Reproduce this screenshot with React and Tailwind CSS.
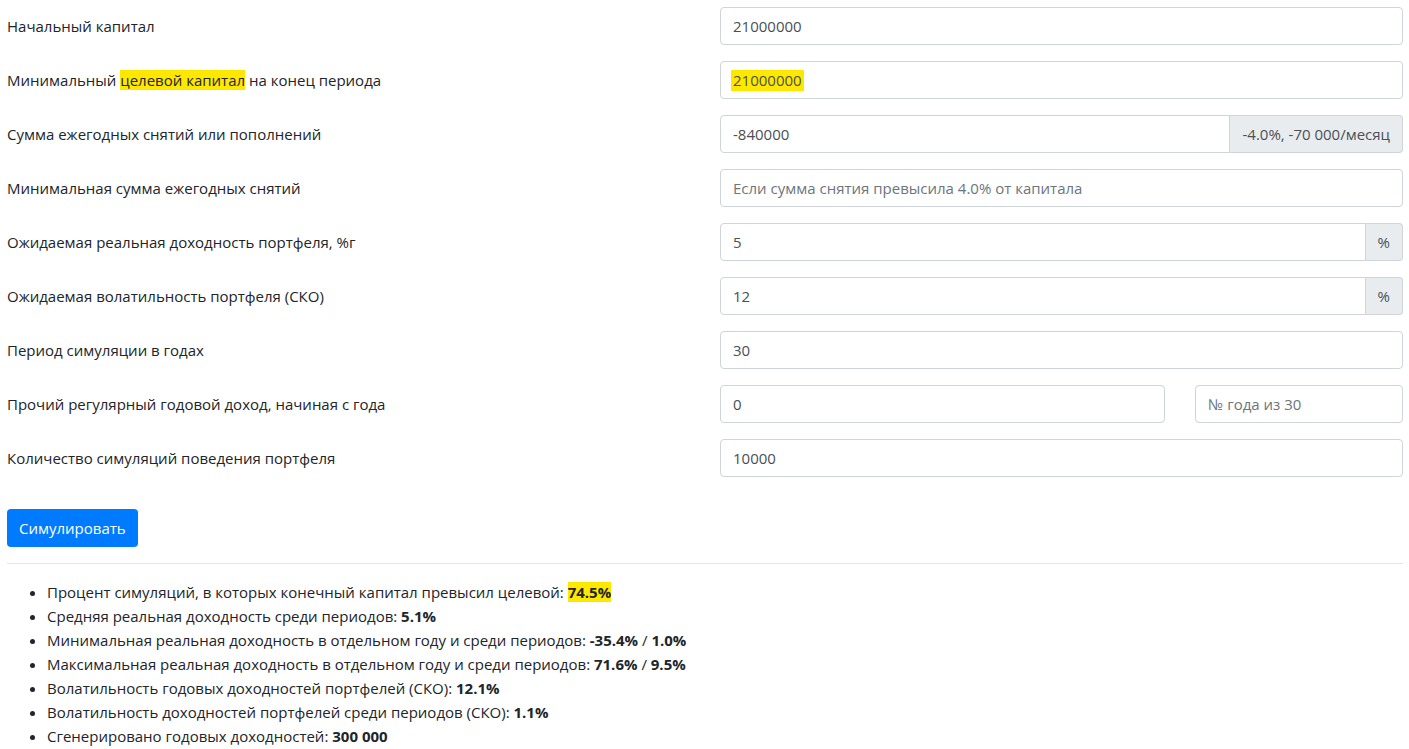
import React from 'react';

const inputCls =
  'h-[38px] w-full rounded-[4px] border border-[#ced4da] bg-white px-3 text-[15px] text-[#495057] placeholder:text-[#6c757d] outline-none';

const Row = ({ label, children }) => (
  <div className="mb-4 flex">
    <label className="w-[713px] shrink-0 pt-[7px] pb-[7px] leading-6">{label}</label>
    <div className="flex-1">{children}</div>
  </div>
);

const Appended = ({ value, addon }) => (
  <div className="flex">
    <input
      className="h-[38px] min-w-0 flex-1 rounded-l-[4px] border border-[#ced4da] bg-white px-3 text-[15px] text-[#495057] outline-none"
      defaultValue={value}
    />
    <span className="flex h-[38px] items-center rounded-r-[4px] border border-l-0 border-[#ced4da] bg-[#e9ecef] px-3 text-[#495057]">
      {addon}
    </span>
  </div>
);

export default function App() {
  return (
    <div
      className="min-h-screen bg-white pt-[7px] pr-[6px] pl-[7px] text-[15px] text-[#212529]"
      style={{ fontFamily: '"Open Sans", "Liberation Sans", sans-serif' }}
    >
      <Row label="Начальный капитал">
        <input className={inputCls} defaultValue="21000000" />
      </Row>
      <Row
        label={
          <>
            Минимальный <span className="bg-[#ffe800]">целевой капитал</span> на конец периода
          </>
        }
      >
        <div className="flex h-[38px] items-center rounded-[4px] border border-[#ced4da] bg-white px-[10px] text-[#495057]">
          <span className="bg-[#ffe800] px-[2px] leading-[21px]">21000000</span>
        </div>
      </Row>
      <Row label="Сумма ежегодных снятий или пополнений">
        <Appended value="-840000" addon="-4.0%, -70 000/месяц" />
      </Row>
      <Row label="Минимальная сумма ежегодных снятий">
        <input className={inputCls} placeholder="Если сумма снятия превысила 4.0% от капитала" />
      </Row>
      <Row label="Ожидаемая реальная доходность портфеля, %г">
        <Appended value="5" addon="%" />
      </Row>
      <Row label="Ожидаемая волатильность портфеля (СКО)">
        <Appended value="12" addon="%" />
      </Row>
      <Row label="Период симуляции в годах">
        <input className={inputCls} defaultValue="30" />
      </Row>
      <Row label="Прочий регулярный годовой доход, начиная с года">
        <div className="flex gap-[30px]">
          <input className={inputCls + ' !w-[445px] shrink-0'} defaultValue="0" />
          <input className={inputCls} placeholder="№ года из 30" />
        </div>
      </Row>
      <Row label="Количество симуляций поведения портфеля">
        <input className={inputCls} defaultValue="10000" />
      </Row>

      <button className="mt-4 h-[38px] rounded-[4px] bg-[#007bff] px-3 text-white">Симулировать</button>

      <hr className="my-4 border-t border-[#0000001a]" />

      <ul className="list-disc pl-10 leading-6">
        <li>
          Процент симуляций, в которых конечный капитал превысил целевой:{' '}
          <b className="bg-[#ffe800]">74.5%</b>
        </li>
        <li>
          Средняя реальная доходность среди периодов: <b>5.1%</b>
        </li>
        <li>
          Минимальная реальная доходность в отдельном году и среди периодов: <b>-35.4%</b> / <b>1.0%</b>
        </li>
        <li>
          Максимальная реальная доходность в отдельном году и среди периодов: <b>71.6%</b> / <b>9.5%</b>
        </li>
        <li>
          Волатильность годовых доходностей портфелей (СКО): <b>12.1%</b>
        </li>
        <li>
          Волатильность доходностей портфелей среди периодов (СКО): <b>1.1%</b>
        </li>
        <li>
          Сгенерировано годовых доходностей: <b>300 000</b>
        </li>
      </ul>
    </div>
  );
}
